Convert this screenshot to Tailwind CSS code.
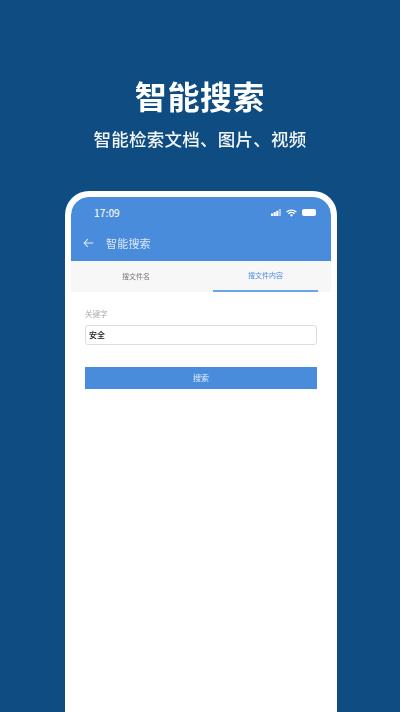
<!DOCTYPE html>
<html lang="zh">
  <head>
    <meta charset="UTF-8" />
    <meta name="viewport" content="width=device-width, initial-scale=1.0" />
    <title>智能搜索</title>
    <script src="https://cdn.jsdelivr.net/npm/@tailwindcss/browser@4"></script>
  </head>
  <body class="bg-[#0f4c81] font-['Noto_Sans_CJK_SC','Liberation_Sans',sans-serif]">
    <div class="w-[400px] h-[712px] overflow-hidden flex flex-col items-center blur-[0.4px]">
      <!-- Heading -->
      <h1 class="mt-[74px] h-[42px] leading-[42px] text-[32px] font-bold tracking-[0.6px] text-white">智能搜索</h1>
      <p class="mt-[11px] h-[24px] leading-[24px] text-[17.5px] font-medium tracking-[0.25px] text-white/95">智能检索文档、图片、视频</p>

      <!-- Phone -->
      <div class="mt-[40px] ml-[2px] w-[272px] h-[540px] shrink-0 bg-white rounded-t-[24px] border-[6px] border-b-0 border-white overflow-hidden flex flex-col">
        <!-- Status bar + title -->
        <div class="bg-[#4a8cdc] h-[64px] rounded-t-[18px] text-white flex flex-col">
          <div class="h-[31px] pl-[23px] pr-[15px] flex items-center justify-between">
            <span class="text-[10px] font-medium text-white/90">17:09</span>
            <div class="flex items-center gap-[5px]">
              <svg width="10" height="7" viewBox="0 0 10 7" fill="#fff"><rect x="0" y="4.5" width="2.2" height="2.5"/><rect x="2.6" y="3.2" width="2.2" height="3.8"/><rect x="5.2" y="1.8" width="2.2" height="5.2"/><rect x="7.8" y="0" width="2.2" height="7" fill="#a9c9ef"/></svg>
              <svg width="11" height="8" viewBox="0 0 10 7" fill="none" stroke="#fff" stroke-width="1.2"><path d="M.6 2.6a6.3 6.3 0 0 1 8.8 0M2.2 4.2a4 4 0 0 1 5.6 0"/><path d="M3.6 5.4 5 6.9l1.4-1.5a2 2 0 0 0-2.8 0z" fill="#fff" stroke="none"/></svg>
              <div class="w-[14px] h-[7px] rounded-[2px] bg-white"></div>
            </div>
          </div>
          <div class="h-[33px] pb-[3px] pl-[12px] flex items-center">
            <svg width="11" height="10" viewBox="0 0 13 11" fill="none" stroke="#e4eefa" stroke-width="1.2"><path d="M12 5.5H1.5M5.8 1 1.3 5.5 5.8 10"/></svg>
            <span class="ml-[12px] text-[11px] tracking-[0.2px] text-white/80">智能搜索</span>
          </div>
        </div>
        <!-- Tabs -->
        <div class="h-[31px] bg-[#f7f7f7] flex text-[7px]">
          <div class="w-[130px] flex items-center justify-center text-[#777]">搜文件名</div>
          <div class="ml-[12px] w-[105px] flex flex-col">
            <div class="flex-1 flex items-center justify-center text-[#4a8cdc]">搜文件内容</div>
            <div class="h-[2px] bg-[#6aa5ea]"></div>
          </div>
        </div>
        <!-- Form -->
        <div class="px-[14px] pt-[16px]">
          <label class="block h-[12px] leading-[12px] text-[7.5px] text-[#aaa]">关键字</label>
          <div class="mt-[5px] w-[232px] h-[20px] border border-[#ddd] rounded-[3px] px-[3px] flex items-center text-[8px] font-medium text-[#222]">安全</div>
          <button class="mt-[22px] block w-[232px] h-[22px] bg-[#4a8cdc] text-[8px] text-white/85">搜索</button>
        </div>
      </div>
    </div>
  </body>
</html>
